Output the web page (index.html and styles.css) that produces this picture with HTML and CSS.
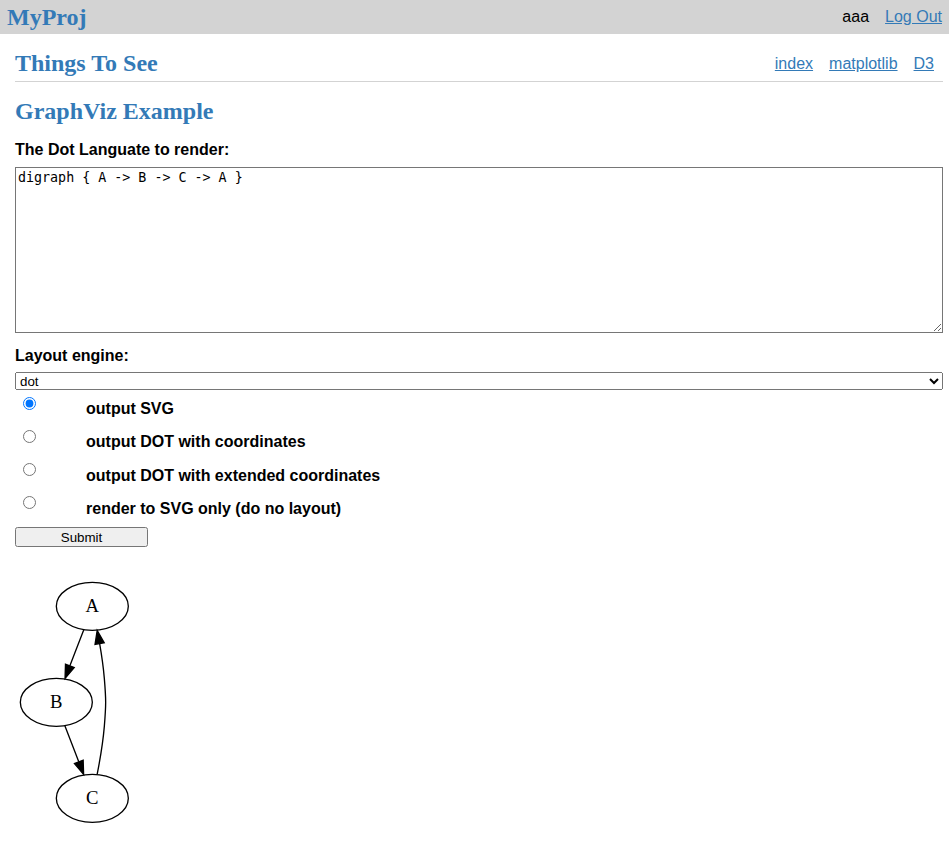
FILE: index.html
```html
<!DOCTYPE html>
<html>
<head>
<meta charset="utf-8">
<title>GraphViz Example</title>
<link rel="stylesheet" href="styles.css">
</head>
<body>
<div class="topbar">
  <a class="brand" href="#">MyProj</a>
  <div class="user">
    <span>aaa</span>
    <a href="#">Log Out</a>
  </div>
</div>
<div class="content">
  <div class="section-head">
    <h2 class="title">Things To See</h2>
    <nav class="nav">
      <a href="#">index</a>
      <a href="#">matplotlib</a>
      <a href="#">D3</a>
    </nav>
  </div>
  <h2 class="page-title">GraphViz Example</h2>
  <form class="form">
    <label class="field-label" for="dot">The Dot Languate to render:</label>
    <textarea id="dot" class="dot-input">digraph { A -&gt; B -&gt; C -&gt; A }</textarea>
    <label class="field-label engine-label" for="engine">Layout engine:</label>
    <select id="engine" class="engine">
      <option>dot</option>
      <option>neato</option>
      <option>circo</option>
      <option>twopi</option>
      <option>fdp</option>
    </select>
    <div class="options">
      <div class="option"><input type="radio" name="fmt" checked><span class="opt-label">output SVG</span></div>
      <div class="option"><input type="radio" name="fmt"><span class="opt-label">output DOT with coordinates</span></div>
      <div class="option"><input type="radio" name="fmt"><span class="opt-label">output DOT with extended coordinates</span></div>
      <div class="option"><input type="radio" name="fmt"><span class="opt-label">render to SVG only (do no layout)</span></div>
    </div>
    <button type="button" class="submit">Submit</button>
  </form>
  <div class="graph">
    <svg width="118.67" height="250.67" viewBox="0.00 0.00 89.00 188.00" xmlns="http://www.w3.org/2000/svg">
      <g transform="translate(4 184)">
        <polygon fill="white" stroke="none" points="-4,4 -4,-184 85,-184 85,4 -4,4"/>
        <ellipse fill="none" stroke="black" cx="54" cy="-162" rx="27" ry="18"/>
        <text text-anchor="middle" x="54" y="-157.8" font-family="Liberation Serif, serif" font-size="14">A</text>
        <ellipse fill="none" stroke="black" cx="27" cy="-90" rx="27" ry="18"/>
        <text text-anchor="middle" x="27" y="-85.8" font-family="Liberation Serif, serif" font-size="14">B</text>
        <path fill="none" stroke="black" d="M47.6,-144.41C44.49,-136.34 40.67,-126.43 37.17,-117.35"/>
        <polygon fill="black" stroke="black" points="40.4,-116.03 33.54,-107.96 33.87,-118.55 40.4,-116.03"/>
        <ellipse fill="none" stroke="black" cx="54" cy="-18" rx="27" ry="18"/>
        <text text-anchor="middle" x="54" y="-13.8" font-family="Liberation Serif, serif" font-size="14">C</text>
        <path fill="none" stroke="black" d="M33.4,-72.41C36.51,-64.34 40.33,-54.43 43.83,-45.35"/>
        <polygon fill="black" stroke="black" points="47.13,-46.55 47.46,-35.96 40.6,-44.03 47.13,-46.55"/>
        <path fill="none" stroke="black" d="M57.65,-36.09C59.68,-46.43 61.98,-59.91 63,-72 64.34,-87.94 64.34,-92.06 63,-108 62.28,-116.51 60.93,-125.75 59.49,-133.99"/>
        <polygon fill="black" stroke="black" points="56.04,-133.48 57.65,-143.91 62.92,-134.74 56.04,-133.48"/>
      </g>
    </svg>
  </div>
</div>
</body>
</html>
```
FILE: styles.css
```css
html, body {
  margin: 0;
  padding: 0;
  background: #fff;
}

body {
  font-family: "Liberation Sans", Arial, sans-serif;
  font-size: 16px;
  color: #000;
}

a {
  color: #337ab7;
}

.topbar {
  background: #d3d3d3;
  height: 34px;
  display: flex;
  align-items: center;
  justify-content: space-between;
  padding: 0 7px;
}

.brand {
  font-family: "Liberation Serif", "Times New Roman", serif;
  font-weight: bold;
  font-size: 24px;
  color: #337ab7;
  text-decoration: none;
  line-height: 28px;
}

.user {
  display: flex;
  gap: 16px;
  line-height: 18px;
}

.content {
  padding: 0 6px 0 15px;
}

.section-head {
  display: flex;
  justify-content: space-between;
  align-items: center;
  margin-top: 15px;
  padding-bottom: 4px;
  border-bottom: 1px solid #d3d3d3;
}

.title,
.page-title {
  font-family: "Liberation Serif", "Times New Roman", serif;
  font-weight: bold;
  font-size: 24px;
  line-height: 28px;
  color: #337ab7;
  margin: 0;
}

.nav {
  display: flex;
  line-height: 18px;
  padding-top: 2px;
}

.nav a {
  padding: 0 8px;
}

.nav a:last-child {
  padding-right: 9px;
}

.page-title {
  margin-top: 15px;
}

.form {
  display: flex;
  flex-direction: column;
  align-items: flex-start;
}

.field-label {
  font-weight: bold;
  line-height: 18px;
  margin-top: 16px;
}

.dot-input {
  box-sizing: border-box;
  width: 100%;
  height: 166px;
  margin: 8px 0 0;
  font-family: "DejaVu Sans Mono", monospace;
  font-size: 13.33px;
  padding: 2px;
  border: 1px solid #767676;
}

.engine-label {
  margin-top: 14px;
}

.engine {
  box-sizing: border-box;
  width: 100%;
  height: 18px;
  margin: 7px 0 0;
  font-family: "Liberation Sans", Arial, sans-serif;
  font-size: 13.33px;
}

.options {
  display: grid;
  grid-auto-rows: 33.33px;
  width: 100%;
}

.option {
  display: flex;
  align-items: flex-start;
}

.option input {
  width: 13px;
  height: 13px;
  margin: 6.5px 0 0 8px;
}

.opt-label {
  font-weight: bold;
  line-height: 18px;
  margin: 10px 0 0 50px;
}

.submit {
  box-sizing: border-box;
  width: 133px;
  height: 20px;
  margin-top: 3.7px;
  font-family: "Liberation Sans", Arial, sans-serif;
  font-size: 13.33px;
  padding: 1px 6px;
}

.graph {
  margin: 30px 0 0 0;
  line-height: 0;
}
```
